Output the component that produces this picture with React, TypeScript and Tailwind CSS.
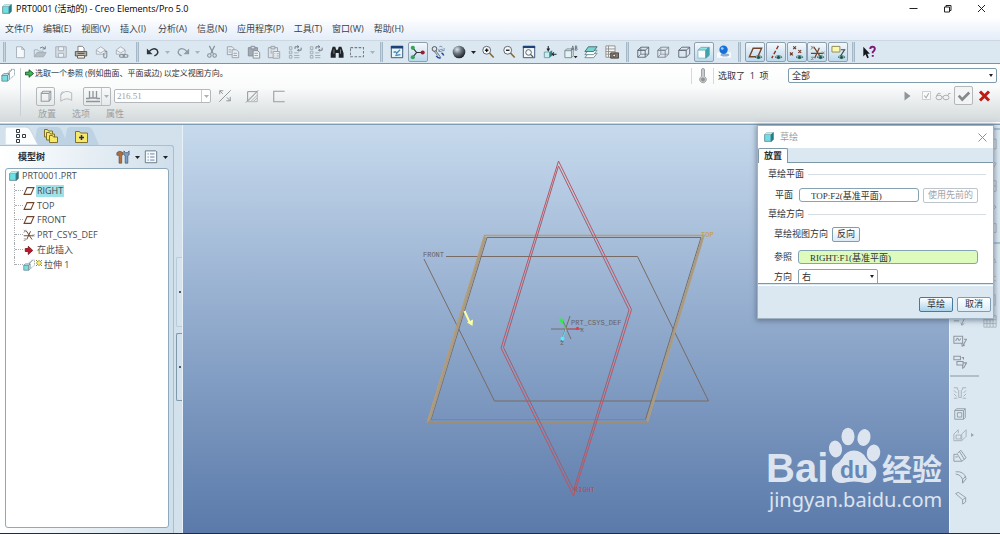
import type { ReactNode } from "react";

const G = "#a3abb3";

function Icon({ children, size = 16 }: { children: ReactNode; size?: number }) {
  return (
    <svg width={size} height={size} viewBox="0 0 16 16" fill="none" className="shrink-0" aria-hidden="true">
      {children}
    </svg>
  );
}

function Tool({ label, pressed, children }: { label: string; pressed?: boolean; children: ReactNode }) {
  return (
    <button
      type="button"
      aria-label={label}
      className={
        pressed
          ? "flex h-5 w-5 shrink-0 items-center justify-center rounded-[2px] border border-[#8fa1b0] bg-linear-to-b from-[#f4f8fb] to-[#bcd9ec]"
          : "flex h-5 w-5 shrink-0 items-center justify-center"
      }
    >
      <Icon size={pressed ? 15 : 14}>{children}</Icon>
    </button>
  );
}

function Caret({ label, dim }: { label: string; dim?: boolean }) {
  return (
    <button type="button" aria-label={label} className="flex h-5 w-2 shrink-0 items-center justify-center">
      <svg width="5" height="3" viewBox="0 0 5 3" aria-hidden="true">
        <path d="M0 0h5L2.500 3z" fill={dim ? "#a9b3bd" : "#222"} />
      </svg>
    </button>
  );
}

function Handle() {
  return <div className="mx-1 h-5 w-[3px] shrink-0 border-x border-[#a5b8c8] bg-[#c6d4df]" />;
}

const Eye = () => (
  <g>
    <path d="M7.500 13Q11 9.500 15 13Q11 16 7.500 13z" fill="#dfeee9" stroke="#2a5a52" strokeWidth=".8" />
    <circle cx="11.200" cy="13" r="1.600" fill="#17564c" />
  </g>
);

const Cube = ({ stroke, front = "none", back = true }: { stroke: string; front?: string; back?: boolean }) => (
  <g stroke={stroke} strokeWidth="1" strokeLinejoin="round">
    <path d="M2 6h8.500v8H2z" fill={front} />
    <path d="M2 6l3.500-3.500h9L10.500 6zM14.500 2.500v8l-4 3.500" />
    {back && <path d="M5.500 3v7.500h8.500M5.500 10.500L2 14" strokeWidth=".8" />}
  </g>
);

const SolidCube = () => (
  <g stroke="#3f6970" strokeWidth="1" strokeLinejoin="round">
    <path d="M1 4h10.500v11H1z" fill="#6fdfe6" />
    <path d="M1 4l3-3h11l-3.500 3z" fill="#c2f5f6" stroke="#7fb4ba" />
    <path d="M15 1v11l-3.500 3V4z" fill="#237c88" />
  </g>
);

const Extrude = () => (
  <g stroke="#6b8790" strokeWidth="1" strokeLinejoin="round">
    <path d="M8 5l3.500-3.500h4V8L10 13" strokeDasharray="1.500 1" />
    <path d="M8 6.500L12.500 2" />
    <path d="M1 8.500h6.500V15H1z" fill="#7adfe4" />
    <path d="M1 8.500l2-2h6.500l-2 2zM9.500 6.500V13l-2 2V8.500z" fill="#d4f3f5" />
  </g>
);

const Magnifier = ({ plus }: { plus?: boolean }) => (
  <g>
    <circle cx="6.500" cy="6" r="4.500" fill="#f5fafc" stroke="#52575e" />
    <path d="M4.500 6h4" stroke="#111" strokeWidth="1.500" />
    {plus && <path d="M6.500 4v4" stroke="#111" strokeWidth="1.500" />}
    <path d="M9.700 9.200l4.800 5" stroke="#8b6430" strokeWidth="1.800" />
  </g>
);

const Regen = () => (
  <g stroke={G} strokeWidth="1.100">
    <path d="M1.500 2h3v3h-3zM1.500 7h3v3h-3zM1.500 12h3v3h-3zM7 9h5M7 12h6M7 14.500h6" />
    <path d="M8 4.500V2h4M10.500.5L12.500 2l-2 1.500M15 3v3h-4M12.500 4.500L11 6l1.500 1.500" stroke="#6f7984" />
  </g>
);

const DatumPlane = () => <path d="M5.500 3.500h9L10.500 12.500H1.500z" stroke="#71452c" strokeWidth="1.500" />;

const Csys = () => (
  <g stroke="#71452c" strokeWidth="1.300">
    <path d="M1 9h13M4 2l8 12M10 3L5 14" />
    <path d="M1 1l2.500 3M3.500 1L1 5M13 7l2.500 3M15.500 7L13 10M1 13h3l-3 3h3" stroke="#777" strokeWidth=".8" />
  </g>
);

function MenuBar() {
  const items = ["文件(F)", "编辑(E)", "视图(V)", "插入(I)", "分析(A)", "信息(N)", "应用程序(P)", "工具(T)", "窗口(W)", "帮助(H)"];
  return (
    <nav className="flex h-[23px] shrink-0 items-center gap-[10px] bg-linear-to-b from-white to-[#e4edf9] px-[5px]">
      {items.map((t) => (
        <button key={t} type="button" className="min-w-[28px] text-left whitespace-nowrap text-[#3a3f46]">
          {t}
        </button>
      ))}
    </nav>
  );
}

function Toolbar() {
  return (
    <div className="flex h-6 shrink-0 items-center overflow-hidden border-t border-b border-t-[#cbd8e2] border-b-[#7895a8] bg-[#dbe8f2]">
      <div className="ml-[3px] h-5 w-[3px] shrink-0 border-x border-[#a5b8c8] bg-[#c6d4df]" />
      <div className="ml-1 flex w-[122px] shrink-0 justify-between">
        <Tool label="新建">
          <path d="M4 2h6l3 3v9.500H4zM10 2v3h3" fill="#f6f9fb" stroke={G} />
        </Tool>
        <Tool label="打开">
          <path d="M1.500 13.500v-8h4l1 1.500h5v1.500" stroke={G} />
          <path d="M1.500 13.500l3-5h10.500l-3 5z" fill="#b5bdc5" stroke={G} />
          <path d="M8 3.500Q11 1 13.500 4M14 1.500V4.500h-3" stroke="#67727d" />
        </Tool>
        <Tool label="保存">
          <path d="M2 2h12v12H2z" fill="#d5dde4" stroke={G} />
          <path d="M5 2h6v4.500H5zM5 9.500h6V14H5z" fill="#eef3f7" stroke={G} />
        </Tool>
        <Tool label="打印">
          <path d="M4.500 7V1.500h5l2 2V7" fill="#fff" stroke="#777" />
          <path d="M1.500 7.500h13v5h-13z" fill="#b9b2a9" stroke="#4d4a47" />
          <path d="M4 12h8v3H4z" fill="#f1eadf" stroke="#5d5852" />
          <path d="M4 9.500h8" stroke="#3f3b38" />
          <path d="M12.500 9h1" stroke="#d49a3c" />
        </Tool>
        <Tool label="发送邮件">
          <path d="M1.500 10.500v-5l5-3.500 5 3.500v5z" fill="#eff3f6" stroke={G} />
          <path d="M1.500 6l5 3 5-3" stroke={G} />
          <path d="M10 9v4a1.700 1.700 0 003.500 0V7.500a1.500 1.500 0 00-2 0" stroke="#858f99" strokeWidth="1.200" />
        </Tool>
        <Tool label="发送链接">
          <path d="M1.500 10.500v-5l5-3.500 5 3.500v5z" fill="#eff3f6" stroke={G} />
          <path d="M1.500 6l5 3 5-3" stroke={G} />
          <ellipse cx="8" cy="12.500" rx="2.800" ry="1.600" stroke="#858f99" strokeWidth="1.200" />
          <ellipse cx="12" cy="12.500" rx="2.800" ry="1.600" stroke="#858f99" strokeWidth="1.200" />
        </Tool>
      </div>
      <Handle />
      <div className="flex w-[233px] shrink-0 justify-between">
        <Tool label="撤消">
          <path d="M3 8Q8 2 12.500 5.500Q15.500 10 9.500 12.500" stroke="#30363d" strokeWidth="1.700" />
          <path d="M1 4v6.500h6.500z" fill="#30363d" />
        </Tool>
        <Caret label="撤消列表" dim />
        <Tool label="重做">
          <path d="M13 8Q8 2 3.500 5.500Q.5 10 6.500 12.500" stroke="#8f99a3" strokeWidth="1.500" />
          <path d="M15 4v6.500H8.500z" fill="#8f99a3" />
        </Tool>
        <Caret label="重做列表" dim />
        <Tool label="剪切">
          <path d="M5 1l4.500 9M11 1L6.500 10" stroke="#848e98" strokeWidth="1.300" />
          <circle cx="5" cy="12" r="2" stroke="#848e98" strokeWidth="1.200" />
          <circle cx="11" cy="12" r="2" stroke="#848e98" strokeWidth="1.200" />
        </Tool>
        <Tool label="复制">
          <path d="M1.500 2h5.500l2 2v7H1.500z" fill="#e7edf2" stroke="#929ca6" />
          <path d="M7 5.500h5l2.500 2.500v6.500H7z" fill="#e7edf2" stroke="#929ca6" />
          <path d="M8.500 9.500h4M8.500 12h4M3 5.500h3M3 8h3" stroke="#929ca6" />
        </Tool>
        <Tool label="粘贴">
          <path d="M1.500 3h10.500v9.500H1.500z" fill="#a2abb4" stroke="#808a95" />
          <path d="M4.500 1.500h4.500v3H4.500z" fill="#d5dbe0" stroke="#808a95" />
          <path d="M7 6.500h5l2.500 2v6.500H7z" fill="#edf2f5" stroke="#808a95" />
          <path d="M8.500 9.500h4M8.500 12h4" stroke="#929ca6" />
        </Tool>
        <Tool label="选择性粘贴">
          <path d="M1.500 3h10.500v11.500H1.500z" fill="#dfe5ea" stroke="#929ca6" />
          <path d="M4.500 1.500h4.500v3H4.500z" fill="#d5dbe0" stroke="#929ca6" />
          <path d="M7 7.500h7.500v7.500H7z" fill="#edf2f5" stroke="#929ca6" />
          <path d="M8.500 10h1M11 10h2.500M8.500 12.500h1M11 12.500h2.500M4 7h2M4 9h2" stroke="#929ca6" />
        </Tool>
        <Tool label="再生">
          <Regen />
        </Tool>
        <Tool label="再生管理器">
          <Regen />
        </Tool>
        <Tool label="查找">
          <path d="M3 2h3l1 3.500h2L10 2h3l2.500 7.500V14.500h-5.500V9H6.500v5.500H.8V9.500z" fill="#202327" />
          <path d="M4.500 5v5M12 5v5" stroke="#8b9096" />
        </Tool>
        <Tool label="选择框">
          <path d="M.5 3h15v10.500H.5z" stroke="#707b86" strokeWidth="1.200" strokeDasharray="3 1.700" />
        </Tool>
        <Caret label="选择列表" dim />
      </div>
      <Handle />
      <div className="flex w-[235px] shrink-0 justify-between">
        <Tool label="草绘器">
          <path d="M1.500 1.500h13v13h-13z" fill="#e9f7fd" stroke="#27466c" />
          <path d="M1 1h14v3H1z" fill="#1d4278" />
          <path d="M4 8.500q3-2 3.500 1l4-4M6 12l6-1" stroke="#4b8cb6" strokeWidth="1.500" />
        </Tool>
        <Tool label="旋转中心" pressed>
          <path d="M3 3l4 5-4 5M7 8h6.500" stroke="#333" strokeWidth="1.200" />
          <circle cx="3" cy="3" r="2.200" fill="#35a45a" />
          <circle cx="3" cy="13" r="2.200" fill="#35a45a" />
          <circle cx="13.500" cy="8" r="2.200" fill="#a3182c" />
        </Tool>
        <Tool label="定向模式">
          <circle cx="4" cy="4.500" r="2.700" stroke="#444" />
          <path d="M5.500 6.500L11 14M3.500 7l4 5" stroke="#5b6570" />
          <path d="M9.500 2q2-1.500 3.500.5M15 3.500v3h-3M9 7q2-3 4.500-2M9 4.500v3h3" stroke="#6b8aa8" />
          <path d="M6 12.500q2 3 5 2M12 9q2 1 2.500 3" stroke="#21489b" strokeWidth="1.700" />
        </Tool>
        <Tool label="外观库">
          <defs>
            <radialGradient id="ball" cx=".35" cy=".3" r=".75">
              <stop offset="0" stopColor="#dbe4ec" />
              <stop offset=".45" stopColor="#6d7780" />
              <stop offset="1" stopColor="#171b20" />
            </radialGradient>
          </defs>
          <circle cx="8" cy="8" r="7.200" fill="url(#ball)" />
        </Tool>
        <Caret label="外观列表" />
        <Tool label="放大">
          <Magnifier plus />
        </Tool>
        <Tool label="缩小">
          <Magnifier />
        </Tool>
        <Tool label="重新调整">
          <path d="M1.500 1.500h13v13h-13z" fill="#f3f8fb" stroke="#27466c" />
          <path d="M1 1h14v2.500H1z" fill="#1d4278" />
          <circle cx="7.500" cy="8.500" r="3.200" stroke="#555" />
          <path d="M9.700 10.700l3 3" stroke="#555" strokeWidth="1.400" />
        </Tool>
        <Tool label="重定向">
          <path d="M1.500 8h6v6.500h-6z" fill="#c4eef0" stroke="#73979d" />
          <path d="M7.500 8l3-2v6l-3 2.500z" fill="#348089" />
          <path d="M6 1v5M4.500 4L6 6.500 7.500 4M15.500 10.500H11M12.500 8.500l-2 2 2 2" stroke="#20262c" strokeWidth="1.200" />
        </Tool>
        <Tool label="已命名视图">
          <path d="M1 6.500h7.500v8H1zM1 6.500l2-2h7l-1.500 2M10.500 5v7.500l-2 2" fill="#e6f3f5" stroke="#73858d" />
          <path d="M8.500 6l1.500-5 1.500 5M9 4.500h2M13 1v5h1.500q1.300-1.300 0-2.500H13h1.200q1.200-1.200 0-2.500z" stroke="#555d66" strokeWidth=".8" />
          <path d="M11 12.500h4.500L13.200 15z" fill="#222" />
        </Tool>
        <Tool label="层">
          <path d="M5 9.500h10l-4 5H1z" fill="#fff" stroke="#60868a" />
          <path d="M5 6h10l-4 5H1z" fill="#fff" stroke="#60868a" />
          <path d="M5 2h10l-4 5.500H1z" fill="#79d4cf" stroke="#40666a" />
        </Tool>
        <Tool label="视图管理器">
          <path d="M1 1h10.500v13H1zM4 1v13M1 4.500h10.500M1 7.500h10.500M1 10.500h10.500" fill="#f7f7f5" stroke="#8c8c8a" />
          <path d="M6.500 9h9v6h-9z" fill="#857c6f" stroke="#403a34" />
          <circle cx="10.500" cy="12" r="1.600" fill="#eee" stroke="#403a34" />
        </Tool>
      </div>
      <Handle />
      <div className="flex w-[101px] shrink-0 justify-between">
        <Tool label="线框">
          <Cube stroke="#5a626b" />
        </Tool>
        <Tool label="隐藏线">
          <Cube stroke="#7c858e" front="#dce5ec" />
        </Tool>
        <Tool label="无隐藏线">
          <Cube stroke="#5a626b" back={false} />
        </Tool>
        <Tool label="着色" pressed>
          <path d="M2 5.500l3.500-3h8.500l-3.500 3z" fill="#8be5e8" stroke="#6ab2b8" />
          <path d="M2 5.500h8.500V14H2z" fill="#fafdfd" stroke="#8fbabf" />
          <path d="M14 2.500V11l-3.500 3V5.500z" fill="#39a6af" stroke="#4d9aa1" />
        </Tool>
        <Tool label="增强的真实感">
          <path d="M0 8.500h16v6H0z" fill="#f8fbfd" />
          <ellipse cx="9" cy="11.500" rx="5" ry="1.700" fill="#93aecb" />
          <circle cx="7.500" cy="5.500" r="4.800" fill="#1670da" />
          <circle cx="6" cy="4" r="1.500" fill="#a4d0fa" />
        </Tool>
      </div>
      <Handle />
      <div className="flex w-[103px] shrink-0 justify-between">
        <Tool label="基准平面显示" pressed>
          <DatumPlane />
          <Eye />
        </Tool>
        <Tool label="基准轴显示" pressed>
          <path d="M11 1L4 14" stroke="#8a3226" strokeWidth="1.500" strokeDasharray="4 2" />
          <Eye />
        </Tool>
        <Tool label="基准点显示" pressed>
          <path d="M4.500 1.500l3 3m0-3l-3 3M1 8l3 3m0-3l-3 3M10 5.500l3 3m0-3l-3 3" stroke="#703424" strokeWidth="1.200" />
          <Eye />
        </Tool>
        <Tool label="坐标系显示" pressed>
          <Csys />
          <Eye />
        </Tool>
        <Tool label="注释显示" pressed>
          <path d="M1 1.500h8.500v6H1z" fill="#fbf7ad" stroke="#8c8a55" />
          <path d="M10.500 5h4L10 12" stroke="#444" strokeWidth="1.200" />
          <Eye />
        </Tool>
      </div>
      <Handle />
      <Tool label="帮助">
        <path d="M1.500 2v11L4 10.500l2 4.500 1.800-.8L6 10h3z" fill="#151820" />
        <path d="M9.500 4.500Q9.500 2 12 2t2.700 2.500Q14.500 6.500 12.300 8v1.500M12.300 11.500v2" stroke="#7d1a75" strokeWidth="2.200" />
      </Tool>
    </div>
  );
}

function Dashboard() {
  return (
    <section className="flex h-[58px] shrink-0 justify-between bg-linear-to-b from-white via-[#fafbfb] via-40% to-[#d3d9db]">
      <div className="flex pt-1">
        <div className="mr-1 flex h-12 w-[21px] shrink-0 justify-center border-r border-[#c9cfd4] pr-1">
          <Icon size={14}>
            <Extrude />
          </Icon>
        </div>
        <div>
          <p className="flex h-[10px] items-center gap-px text-[8px] whitespace-nowrap">
            <svg width="9" height="9" viewBox="0 0 10 10" aria-hidden="true">
              <path d="M.5 3.500h4V.8L9.500 5 4.500 9.200V6.500h-4z" fill="#2fc052" stroke="#165426" />
            </svg>
            选取一个参照 (例如曲面、平面或边) 以定义视图方向。
          </p>
          <div className="mt-2 ml-[11px] flex items-center">
            <button type="button" aria-label="实体" className="flex h-[19px] w-[19px] items-center justify-center rounded-[2px] border border-[#b4b8bb]">
              <Icon size={14}>
                <path d="M2.500 5h9v9h-9zM2.500 5l2-2.500h9v9L11.500 14M11.500 5l2-2.500" stroke="#989da2" strokeWidth="1.200" />
              </Icon>
            </button>
            <button type="button" aria-label="曲面" className="mx-px flex h-5 w-5 items-center justify-center">
              <Icon size={14}>
                <path d="M2 14V7Q7 0 14.500 4.500V13Q9 9 2 14zM2 7Q2 3.500 5 3" stroke="#aeb3b7" />
              </Icon>
            </button>
            <div className="ml-[6px] flex h-[19px] w-7 items-center rounded-[2px] border border-[#b4b8bb]">
              <button type="button" aria-label="深度" className="flex h-full flex-1 items-center justify-center border-r border-[#c3c7ca]">
                <Icon>
                  <path d="M4.500 3v7h7V3M8 3v7M1 13.500h14M1 10.500h3.500M11.500 10.500H15" stroke="#8e9499" strokeWidth="1.300" />
                </Icon>
              </button>
              <Caret label="深度选项" dim />
            </div>
            <div className="ml-[3px] flex h-[14px] w-[97px] rounded-[2px] border border-[#b4b8bb] bg-white">
              <input
                aria-label="深度值"
                defaultValue="216.51"
                className="h-full min-w-0 flex-1 bg-transparent px-[2px] font-['Liberation_Serif','Noto_Sans_CJK_SC',serif] text-[#9ba0a5] outline-none"
              />
              <div className="flex items-center border-l border-[#c8ccd0]">
                <Caret label="深度历史" dim />
              </div>
            </div>
            <div className="ml-1 flex w-[74px] justify-between">
              <Tool label="反向深度">
                <path d="M1.500 14.500L14.500 1.500M2 6V2h4M2 2l3.500 3.500M14 9v4.500H9.500M14 13.500l-4-4" stroke="#8f949a" strokeWidth="1.100" />
              </Tool>
              <Tool label="去除材料">
                <path d="M3 14V3h11M1 15.500L15 1.500" stroke="#8f949a" strokeWidth="1.100" />
                <path d="M14 3v11.500H3zM7 14l7-7M10 14l4-4" stroke="#a9adb2" />
              </Tool>
              <Tool label="加厚草绘">
                <path d="M14.500 2.500H2v12h12.500" stroke="#979ca1" strokeWidth="1.200" />
              </Tool>
            </div>
          </div>
          <div className="ml-[13px] flex gap-4 pt-[2px] leading-3 text-[#9b9fa3]">
            <button type="button">放置</button>
            <button type="button">选项</button>
            <button type="button">属性</button>
          </div>
        </div>
      </div>
      <div className="flex flex-col items-end gap-[3px] pt-1 pr-[3px]">
        <div className="flex h-[15px] items-center">
          <div className="flex h-4 w-[23px] justify-center border-x border-[#d6d9dc]">
            <Icon>
              <path d="M6.500 2a1.500 1.500 0 013 0v6.500a3.300 3.300 0 11-3 0z" fill="#c9ccce" stroke="#9ea2a5" />
              <circle cx="8" cy="11.500" r="2" fill="#8f9396" />
            </Icon>
          </div>
          <span className="ml-1 w-[70px] whitespace-nowrap">选取了 &nbsp;1&nbsp; 项</span>
          <label className="relative block h-[15px] w-[209px]">
            <select aria-label="过滤器" className="h-full w-full appearance-none rounded-[2px] border border-[#7f9aab] bg-white pl-[3px] outline-none">
              <option>全部</option>
            </select>
            <span className="pointer-events-none absolute top-[6px] right-1 border-x-2 border-t-[3px] border-x-transparent border-t-[#222]" />
          </label>
        </div>
        <div className="flex h-[19px] items-center pr-[5px]">
          <button type="button" aria-label="继续" className="mr-[11px]">
            <svg width="7" height="10" viewBox="0 0 7 10" aria-hidden="true">
              <path d="M.5.5l6 4.500-6 4.500z" fill="#8f9499" />
            </svg>
          </button>
          <label className="mr-1 flex">
            <input type="checkbox" aria-label="预览" className="peer sr-only" defaultChecked />
            <svg width="9" height="9" viewBox="0 0 10 10" fill="none" aria-hidden="true">
              <path d="M.5.5h9v9h-9z" fill="#fafafa" stroke="#c4c8cb" />
              <path d="M2.500 5l2 2.500 3-5" stroke="#a9adb1" strokeWidth="1.200" />
            </svg>
          </label>
          <Icon>
            <ellipse cx="4" cy="9.500" rx="3" ry="2.300" stroke="#adb1b5" />
            <ellipse cx="11" cy="9.500" rx="3" ry="2.300" stroke="#adb1b5" />
            <path d="M7 9h1M1.500 8q1-4 4-2.500M13 7.500q0-3 2.500-2" stroke="#adb1b5" />
          </Icon>
          <button type="button" aria-label="确定" className="ml-[3px] flex h-[19px] w-[19px] items-center justify-center rounded-[2px] border border-[#b4b8bb] bg-[#f3f4f4]">
            <Icon size={14}>
              <path d="M2 7.500l4 4.500 8-8" stroke="#84898d" strokeWidth="3" />
            </Icon>
          </button>
          <button type="button" aria-label="取消特征" className="ml-1 flex h-5 w-[15px] items-center justify-center">
            <svg width="13" height="12" viewBox="0 0 13 12" fill="none" aria-hidden="true">
              <path d="M2 1.500l9 9M11 1.500l-9 9" stroke="#bb1d15" strokeWidth="3" />
            </svg>
          </button>
        </div>
      </div>
    </section>
  );
}

function SidePanel() {
  const rows: { text: string; icon: ReactNode; selected?: boolean; star?: boolean }[] = [
    { text: "RIGHT", icon: <DatumPlane />, selected: true },
    { text: "TOP", icon: <DatumPlane /> },
    { text: "FRONT", icon: <DatumPlane /> },
    { text: "PRT_CSYS_DEF", icon: <Csys /> },
    { text: "在此插入", icon: <path d="M3 6h4V3l6 5.500L7 14v-4H3z" fill="#c01624" stroke="#6d0d15" /> },
    { text: "拉伸 1", icon: <Extrude />, star: true },
  ];
  return (
    <aside className="flex w-[183px] shrink-0 border-r border-[#e8f1f8] bg-[#d3e1ec]">
      <div className="flex min-w-0 flex-1 flex-col">
        <div className="flex h-5 shrink-0 items-end pt-px pl-[5px]">
          <svg width="94" height="19" viewBox="0 0 94 19" fill="none" aria-hidden="true">
            <path d="M59 19L62 3q1-2 3-2h18q3 0 5 4l6 14z" fill="#bdd3e4" />
            <path d="M29 19L32 3q1-2 3-2h17q3 0 5 4l6 14z" fill="#bdd3e4" />
            <path d="M0 19V3q0-2 2-2h19q3 0 5 4l7 14z" fill="#fbfdfe" stroke="#c7d6e2" />
            <path d="M11.500 3.500h3v3h-3zM11.500 8.500h3v3h-3zM11.500 13.500h3v3h-3zM17.500 8.500h3v3h-3z" stroke="#333a42" />
            <g stroke="#80712c" fill="#f6e86a">
              <path d="M39.500 3.500h3l1 1.500h4v6h-8z" />
              <path d="M41.500 6.500h3l1 1.500h4v6h-8z" />
              <path d="M44.500 9.500h3l1 1.500h4v5.500h-8z" />
              <path d="M70.500 5.500h4l1 1.500h7v9.500h-12z" />
            </g>
            <path d="M76.500 9v5M74 11.500h5" stroke="#222b77" strokeWidth="1.500" />
          </svg>
        </div>
        <div className="mr-2 flex min-h-0 flex-1 flex-col rounded-tr-[3px] border-t border-r border-[#a9bfd0] bg-linear-to-r from-white to-[#cfdfeb] pr-1 pb-[5px] pl-[5px]">
          <div className="flex h-[22px] shrink-0 items-center justify-between pl-[13px]">
            <h2 className="font-bold">模型树</h2>
            <div className="flex items-center">
              <Tool label="设置">
                <path d="M1 3q3-3 7 0v2.500H6.500V15H3.500V6H1z" fill="#b06f3f" stroke="#5e5147" strokeWidth=".8" />
                <path d="M9 1v4.500l1.500 1V15H13.500V6.500l1.500-1V1L13 3h-2z" fill="#7fa0c4" stroke="#405068" strokeWidth=".8" />
              </Tool>
              <Caret label="设置菜单" />
              <Tool label="显示">
                <path d="M1.500 1h12l1 1v12.500h-13z" fill="#f7fafc" stroke="#5f6f7e" />
                <path d="M4 4.500h1.500M7 4.500h5M4 8h1.500M7 8h5M4 11.500h1.500M7 11.500h5" stroke="#5275a0" />
              </Tool>
              <Caret label="显示菜单" />
            </div>
          </div>
          <div className="min-h-0 flex-1 rounded-[3px] border border-[#8ea9ba] bg-white pl-[3px]">
            <ul className="grid h-[103px] grid-rows-7 leading-3 text-[#444b53]">
              <li className="flex items-center gap-[3px]">
                <Icon size={10}>
                  <SolidCube />
                </Icon>
                PRT0001.PRT
              </li>
              {rows.map((r, i) => (
                <li key={r.text} className="flex">
                  <span className={i === rows.length - 1 ? "ml-[5px] h-1/2 border-l border-dotted border-[#a9adb0]" : "ml-[5px] h-full border-l border-dotted border-[#a9adb0]"} />
                  <span className="h-1/2 w-2 border-b border-dotted border-[#a9adb0]" />
                  <span className="flex items-center gap-px">
                    <Icon size={12}>{r.icon}</Icon>
                    {r.star && (
                      <svg width="6" height="6" viewBox="0 0 6 6" className="mb-1" aria-hidden="true">
                        <path d="M0 0l6 6M6 0L0 6M3 0v6M0 3h6" stroke="#84862a" />
                        <path d="M1.500 1.500h3v3h-3z" fill="#ffee5a" />
                      </svg>
                    )}
                    <span className={r.selected ? "bg-[#9fe1e8] px-px" : "px-px"}>{r.text}</span>
                  </span>
                </li>
              ))}
            </ul>
          </div>
        </div>
      </div>
    </aside>
  );
}

function Sash() {
  return (
    <div className="absolute top-[132px] -left-[7px] w-[6px]">
      <div className="flex h-[70px] items-center justify-center rounded-l-[2px] border border-r-0 border-[#b9cbd9] bg-[#d6e4ee]">
        <span className="h-[2px] w-[2px] bg-[#4c5c6b]" />
      </div>
      <div className="mt-[6px] flex h-[68px] items-center justify-center rounded-l-[2px] border border-r-0 border-[#7f98aa] bg-[#d3e2ec]">
        <span className="h-[2px] w-[2px] bg-[#4c5c6b]" />
      </div>
    </div>
  );
}

function Scene() {
  return (
    <svg viewBox="183 125 766 408" preserveAspectRatio="xMinYMin meet" fill="none" className="absolute inset-0 h-full w-full" aria-label="基准平面">
      <g stroke="#786b63" strokeWidth="1">
        <path d="M446 256.500H637.500L708.500 401H494.500L424 259" />
        <path d="M487 237.500H701L645.500 419.500H431z" />
      </g>
      <path d="M484.500 235.500H704L647.500 422H427.500z" stroke="#ba9d72" strokeWidth="1.500" />
      <path d="M485.500 237L429.500 420.500M702.500 237.500L647 420.500" stroke="#a69b86" strokeWidth="2" />
      <path d="M427.500 422H647.500M430 419.500H646" stroke="#91816f" />
      <path d="M558.500 166L629 310L573.500 490L503.500 347.500z" stroke="#a85c67" />
      <path d="M558.500 161L631.500 309.500L573.500 496L501 348z" stroke="#c4525e" />
      <path d="M464.500 311L469.500 322" stroke="#ffffa0" strokeWidth="2" />
      <path d="M467 322.500l5.500 3.500.5-6.500z" fill="#ffffa0" />
      <path d="M551 329h31M570 316l-9 26M562 319l9 20" stroke="#766a66" />
      <path d="M566 329h12" stroke="#bb5668" />
      <circle cx="577.500" cy="328.500" r="1.700" fill="#dc3f52" />
      <path d="M566 329l-4-8" stroke="#42dc5d" />
      <path d="M559.500 318l4.500 1.500-1 4-3-1.500z" fill="#32ec4b" />
      <path d="M566 329l-3 8" stroke="#5ce2ef" />
      <circle cx="562.500" cy="338.500" r="2" fill="#5ceafa" />
      <g className="font-['Liberation_Mono',monospace] text-[7px]">
        <text x="423" y="257" fill="#66605d">FRONT</text>
        <text x="701" y="237" fill="#ca9640">TOP</text>
        <text x="571" y="325" fill="#66605d">PRT_CSYS_DEF</text>
        <text x="574" y="492" fill="#d33c4b">RIGHT</text>
        <text x="580" y="332" fill="#6c6565">x</text>
        <text x="560" y="345" fill="#6c6565">z</text>
      </g>
    </svg>
  );
}

function Watermark() {
  return (
    <svg width="184" height="90" viewBox="765 425 184 90" className="absolute right-0 bottom-[18px]" aria-label="百度经验">
      <g fill="#dce4f0">
        <text x="766" y="482" className="font-['Liberation_Sans',sans-serif] text-[40px] font-bold">Bai</text>
        <ellipse cx="835.500" cy="449" rx="6.500" ry="8.500" transform="rotate(-10 835.500 449)" />
        <ellipse cx="848" cy="436.500" rx="6.500" ry="8.700" />
        <ellipse cx="864" cy="437.500" rx="6.500" ry="8.500" transform="rotate(12 864 437.500)" />
        <ellipse cx="873.500" cy="453" rx="6.700" ry="8.500" transform="rotate(10 873.500 453)" />
        <path d="M854 450.500Q862 450.500 866 458Q869 462 873 465Q878 470 875.500 477Q872.500 483.500 865 483Q860 481.500 854 481.500Q848 481.500 843 483Q835.500 483.500 832.500 477Q830.500 470 835 465Q840 462 842.500 458Q846 450.500 854 450.500z" />
        <text x="882" y="480" className="font-['Noto_Sans_CJK_SC',sans-serif] text-[30px] font-bold">经验</text>
        <text x="769" y="507" className="font-['Noto_Sans',sans-serif] text-[20px]">jingyan.baidu.com</text>
      </g>
      <text x="840" y="478" fill="#6987b5" className="font-['Liberation_Sans',sans-serif] text-[23px] font-bold">du</text>
    </svg>
  );
}

function RightRail() {
  const second: { label: string; path: string }[] = [
    { label: "草绘工具", path: "M1 2.500h14v11H1zM5 9l7-4" },
    { label: "平面工具", path: "M5 3l10 3-4 7-10-3z" },
    { label: "轴工具", path: "M2 2h13v12H2zM2 8h13" },
    { label: "点工具", path: "M8 2l7 6-7 6-7-6z" },
    { label: "坐标系工具", path: "M2 13V3h13v10z" },
  ];
  const third: { label: string; path: string }[] = [
    { label: "镜像", path: "M8 1v14M1 13l5-9v9zM15 13l-5-9v9z" },
    { label: "合并", path: "M1 5h14M1 10h14M5 2v12" },
    { label: "修剪", path: "M2 2h12v12H2z" },
  ];
  return (
    <div className="flex w-[51px] shrink-0 overflow-hidden border-l border-[#eaf3f9] bg-[#dbe8f2]">
      <div className="w-[29px] shrink-0 pt-[185px]">
        <div className="flex flex-col gap-px border-b-2 border-[#b1bfca] pb-[3px]">
          <Tool label="基准曲线">
            <path d="M1 9h6M14 4H9M14 4l-4 9M9 11l1 3 3-2" stroke="#8d969e" />
          </Tool>
          <Tool label="草绘基准">
            <path d="M1 2.500h10v8H1zM3 8q2-5 3-2t3-1M12.500 6h3l-4 7M10 11l.5 3 3-1.500" stroke="#8d969e" strokeWidth="1.200" />
          </Tool>
          <Tool label="基准参照">
            <path d="M1 1.500h7.500v4H1zM4.500 7.500h7v4h-7zM10 3h2v2M12 9h3.500l-3 5M11 12v3l2-1" stroke="#8d969e" strokeWidth="1.200" />
          </Tool>
        </div>
        <div className="flex flex-col gap-px pt-[6px]">
          <Tool label="孔">
            <path d="M1 2h4v1.500l1.500 1.500v8h3V5L11 3.500V2h4M1 14h4M11 14h4M1 5l3 3M1 9l3 3M15 5l-3 3M15 9l-3 3" stroke="#a2abb2" />
          </Tool>
          <Tool label="壳">
            <path d="M2 4l2-2h10v10l-2 2H2zM5 6.500h5v5H5zM12 4v10M2 4h10l2-2" stroke="#8d969e" />
          </Tool>
          <div className="flex items-center gap-px">
            <Tool label="筋">
              <path d="M1 7l5-5M1 7v7.500h9l5-5V2l-5 5v7M3.500 8H9v4.500H3.500zM6 2v4" stroke="#a2abb2" />
            </Tool>
            <svg width="3" height="4" viewBox="0 0 3 4" className="shrink-0" aria-hidden="true">
              <path d="M0 0l3 2-3 2z" fill="#9aa4ad" />
            </svg>
          </div>
          <Tool label="拔模">
            <path d="M1 14V6h4l5 8zM5 5l4-3.500 6 8.500-5 4M7.500 3l5.500 9M2.500 9h3" stroke="#8d969e" />
          </Tool>
          <Tool label="倒圆角">
            <path d="M3 2Q13 1 15 10l-4 5Q12 6 3 4.500M11 15v-4l3.500-4" stroke="#8d969e" />
          </Tool>
          <Tool label="边倒角">
            <path d="M3 3l3-1.500 8.500 6v5L11 15v-5zM11 10l3.500-2.500" stroke="#8d969e" />
          </Tool>
        </div>
      </div>
      <div className="flex w-[22px] shrink-0 flex-col items-center pt-[3px]">
        <div className="flex w-full flex-col items-center gap-px border-y-2 border-[#a9c1d2] py-1">
          {second.map((t) => (
            <Tool key={t.label} label={t.label}>
              <path d={t.path} stroke="#a9b1b8" />
            </Tool>
          ))}
        </div>
        <div className="flex flex-col gap-px pt-1">
          {third.map((t) => (
            <Tool key={t.label} label={t.label}>
              <path d={t.path} stroke="#b5bdc4" />
            </Tool>
          ))}
          <Tool label="阵列">
            <path d="M1 2h14v13H1zM4.500 2v13M8 2v13M11.500 2v13M1 6.500h14M1 11h14" stroke="#a9b1b8" />
          </Tool>
        </div>
      </div>
    </div>
  );
}

function SketchDialog() {
  const serif = "font-['Liberation_Serif','Noto_Sans_CJK_SC',serif]";
  const btn = "flex h-[15px] shrink-0 items-center justify-center rounded-[2px] border border-[#7e9db1] bg-linear-to-b from-white to-[#dcecf6] whitespace-nowrap";
  return (
    <div role="dialog" aria-label="草绘" className="absolute top-0 right-[6px] w-[237px] border border-[#9fb2c1] bg-[#dbe8f2] shadow-[0_1px_5px_1px_rgba(60,75,95,0.5)]">
      <div className="flex h-[22px] items-center bg-white pr-[6px] pl-[6px]">
        <Icon size={10}>
          <SolidCube />
        </Icon>
        <h2 className="ml-[6px] flex-1 text-[#9a9da0]">草绘</h2>
        <button type="button" aria-label="关闭">
          <svg width="9" height="9" viewBox="0 0 9 9" aria-hidden="true">
            <path d="M.5.5l8 8M8.500.5l-8 8" stroke="#8c8f92" />
          </svg>
        </button>
      </div>
      <div className="flex h-[14px]">
        <button type="button" role="tab" aria-selected="true" className="relative z-10 -mb-px h-[15px] w-[30px] rounded-t-[2px] border border-b-0 border-[#7e98a8] bg-white font-bold">
          放置
        </button>
      </div>
      <form className="h-[122px] overflow-hidden border-y border-[#7e98a8] bg-white pt-[5px] pr-[7px] pl-[10px]" onSubmit={(e) => e.preventDefault()}>
        <h3 className="flex h-3 items-center gap-1">
          草绘平面
          <span className="h-px flex-1 bg-[#d5dde3]" />
        </h3>
        <div className="mt-2 flex h-[14px] items-center pl-[7px]">
          <label htmlFor="plane">平面</label>
          <input id="plane" defaultValue="TOP:F2(基准平面)" className={`${serif} ml-[6px] h-[14px] w-[120px] rounded-[3px] border border-[#86a3b4] bg-white pl-[11px] outline-none`} />
          <button type="button" className="ml-1 h-[15px] w-[55px] rounded-[2px] border border-[#bcc5cc] bg-white text-[#9fa3a7]">
            使用先前的
          </button>
        </div>
        <h3 className="mt-[6px] flex h-3 items-center gap-1">
          草绘方向
          <span className="h-px flex-1 bg-[#d5dde3]" />
        </h3>
        <div className="mt-[6px] flex h-4 items-center pl-[6px]">
          草绘视图方向
          <button type="button" className={`${btn} ml-1 w-7`}>
            反向
          </button>
        </div>
        <div className="mt-2 flex h-[14px] items-center pl-[6px]">
          <label htmlFor="ref">参照</label>
          <input id="ref" defaultValue="RIGHT:F1(基准平面)" className={`${serif} ml-[6px] h-[14px] w-[180px] rounded-[3px] border border-[#86a3b4] bg-[#dcfbbd] pl-[11px] outline-none`} />
        </div>
        <div className="mt-[5px] flex h-4 items-center pl-[6px]">
          <label htmlFor="dir">方向</label>
          <span className="relative ml-[6px] h-4 w-20">
            <select id="dir" className="h-full w-full appearance-none rounded-[2px] border border-[#86a3b4] bg-white pl-[3px] outline-none">
              <option>右</option>
            </select>
            <span className="pointer-events-none absolute top-[6px] right-1 border-x-2 border-t-[3px] border-x-transparent border-t-[#222]" />
          </span>
        </div>
      </form>
      <div className="mt-px flex h-[33px] items-center justify-end gap-1 border-t border-white pt-1 pr-[2px]">
        <button type="button" className="flex h-[15px] w-[34px] items-center justify-center rounded-[2px] border border-[#49799a] bg-linear-to-b from-white to-[#a9d3ec]">
          草绘
        </button>
        <button type="button" className={`${btn} w-[34px]`}>
          取消
        </button>
      </div>
    </div>
  );
}

export default function App() {
  return (
    <div className="flex h-screen flex-col overflow-hidden bg-white font-['Open_Sans','Noto_Sans_CJK_SC',sans-serif] text-[9px] leading-3 text-[#2c3137]">
      <header className="flex h-[17px] shrink-0 items-center justify-between pr-[14px] pl-[2px]">
        <h1 className="flex items-center gap-1 whitespace-nowrap text-black">
          <Icon size={10}>
            <SolidCube />
          </Icon>
          PRT0001 (活动的) - Creo Elements/Pro 5.0
        </h1>
        <div className="flex items-center gap-[25px]">
          <button type="button" aria-label="最小化">
            <svg width="9" height="9" viewBox="0 0 9 9" aria-hidden="true">
              <path d="M.5 4.500h8" stroke="#222" />
            </svg>
          </button>
          <button type="button" aria-label="还原">
            <svg width="9" height="9" viewBox="0 0 9 9" fill="none" aria-hidden="true">
              <path d="M1.500 3h5v5h-5zM3 3V1.500h5V6.500H6.500" stroke="#222" />
            </svg>
          </button>
          <button type="button" aria-label="关闭窗口">
            <svg width="9" height="9" viewBox="0 0 9 9" aria-hidden="true">
              <path d="M1 1l7 7M8 1L1 8" stroke="#222" />
            </svg>
          </button>
        </div>
      </header>
      <MenuBar />
      <Toolbar />
      <Dashboard />
      <div className="h-[3px] shrink-0 border-t border-b border-t-white border-b-[#7f9db3] bg-[#c5d5e1]" />
      <main className="relative flex min-h-0 flex-1 border-b border-[#232c37]">
        <SidePanel />
        <div className="relative min-w-0 flex-1 bg-linear-to-b from-[#c7daed] to-[#5b7aaa]">
          <Sash />
          <Scene />
          <Watermark />
        </div>
        <RightRail />
        <SketchDialog />
      </main>
    </div>
  );
}
